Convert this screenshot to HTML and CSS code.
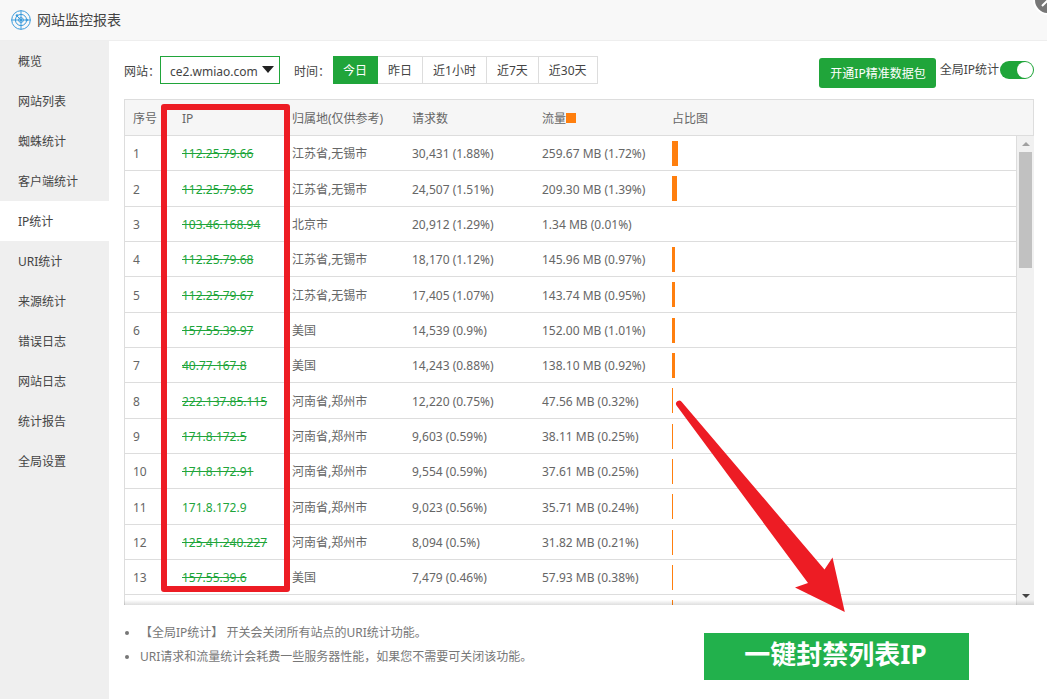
FILE: index.html
```html
<!DOCTYPE html>
<html lang="zh-CN">
<head>
<meta charset="utf-8">
<title>网站监控报表</title>
<link rel="stylesheet" href="styles.css">
</head>
<body>
<div class="window">
  <header class="titlebar">
    <svg class="logo" viewBox="0 0 20 20" aria-hidden="true">
      <circle cx="10" cy="10" r="9.3"/>
      <circle cx="10" cy="10" r="5.6"/>
      <circle cx="10" cy="10" r="2.4"/>
      <path d="M10 0.5V19.5M0.5 10H19.5M5.5 5.5L10 10"/>
      <circle class="dot" cx="10" cy="10" r="1.2"/>
      <circle class="dot" cx="6" cy="5.6" r="1.3"/>
      <circle class="dot" cx="15.8" cy="10" r="1.2"/>
    </svg>
    <h1 class="title">网站监控报表</h1>
  </header>
  <button class="close" type="button" aria-label="关闭">
    <svg viewBox="0 0 26 26" aria-hidden="true"><path d="M7 19L19 7M7 7L19 19"/></svg>
  </button>
  <div class="layout">
    <nav class="sidebar">
      <a class="nav-item" href="#">概览</a>
      <a class="nav-item" href="#">网站列表</a>
      <a class="nav-item" href="#">蜘蛛统计</a>
      <a class="nav-item" href="#">客户端统计</a>
      <a class="nav-item active" href="#">IP统计</a>
      <a class="nav-item" href="#">URI统计</a>
      <a class="nav-item" href="#">来源统计</a>
      <a class="nav-item" href="#">错误日志</a>
      <a class="nav-item" href="#">网站日志</a>
      <a class="nav-item" href="#">统计报告</a>
      <a class="nav-item" href="#">全局设置</a>
    </nav>
    <main class="content">
      <div class="toolbar">
        <label class="label" for="site">网站：</label>
        <div class="select-box">
          <select id="site" class="site-select"><option>ce2.wmiao.com</option></select>
          <svg class="caret" viewBox="0 0 12 7" aria-hidden="true"><path d="M0 0H12L6 7Z"/></svg>
        </div>
        <span class="label time-label">时间：</span>
        <div class="tabs">
          <button class="tab on" type="button">今日</button>
          <button class="tab" type="button">昨日</button>
          <button class="tab" type="button">近1小时</button>
          <button class="tab" type="button">近7天</button>
          <button class="tab" type="button">近30天</button>
        </div>
        <div class="actions">
          <button class="primary" type="button">开通IP精准数据包</button>
          <label class="switch-label" for="global">全局IP统计</label>
          <input id="global" class="switch" type="checkbox" checked>
        </div>
      </div>

      <section class="report">
        <table class="grid head">
          <colgroup><col class="c-no"><col class="c-ip"><col class="c-loc"><col class="c-num"><col class="c-num"><col></colgroup>
          <thead><tr><th>序号</th><th>IP</th><th>归属地(仅供参考)</th><th>请求数</th><th>流量<i class="legend"></i></th><th>占比图</th></tr></thead>
        </table>
        <div class="viewport">
          <div class="rows">
            <table class="grid body">
              <colgroup><col class="c-no"><col class="c-ip"><col class="c-loc"><col class="c-num"><col class="c-num"><col></colgroup>
              <tbody>
                <tr><td>1</td><td><a class="ip banned" href="#">112.25.79.66</a></td><td>江苏省,无锡市</td><td>30,431 (1.88%)</td><td>259.67 MB (1.72%)</td><td><div class="bar" style="width:1.72%"></div></td></tr>
                <tr><td>2</td><td><a class="ip banned" href="#">112.25.79.65</a></td><td>江苏省,无锡市</td><td>24,507 (1.51%)</td><td>209.30 MB (1.39%)</td><td><div class="bar" style="width:1.39%"></div></td></tr>
                <tr><td>3</td><td><a class="ip banned" href="#">103.46.168.94</a></td><td>北京市</td><td>20,912 (1.29%)</td><td>1.34 MB (0.01%)</td><td><div class="bar" style="width:0.01%"></div></td></tr>
                <tr><td>4</td><td><a class="ip banned" href="#">112.25.79.68</a></td><td>江苏省,无锡市</td><td>18,170 (1.12%)</td><td>145.96 MB (0.97%)</td><td><div class="bar" style="width:0.97%"></div></td></tr>
                <tr><td>5</td><td><a class="ip banned" href="#">112.25.79.67</a></td><td>江苏省,无锡市</td><td>17,405 (1.07%)</td><td>143.74 MB (0.95%)</td><td><div class="bar" style="width:0.95%"></div></td></tr>
                <tr><td>6</td><td><a class="ip banned" href="#">157.55.39.97</a></td><td>美国</td><td>14,539 (0.9%)</td><td>152.00 MB (1.01%)</td><td><div class="bar" style="width:1.01%"></div></td></tr>
                <tr><td>7</td><td><a class="ip banned" href="#">40.77.167.8</a></td><td>美国</td><td>14,243 (0.88%)</td><td>138.10 MB (0.92%)</td><td><div class="bar" style="width:0.92%"></div></td></tr>
                <tr><td>8</td><td><a class="ip banned" href="#">222.137.85.115</a></td><td>河南省,郑州市</td><td>12,220 (0.75%)</td><td>47.56 MB (0.32%)</td><td><div class="bar" style="width:0.32%"></div></td></tr>
                <tr><td>9</td><td><a class="ip banned" href="#">171.8.172.5</a></td><td>河南省,郑州市</td><td>9,603 (0.59%)</td><td>38.11 MB (0.25%)</td><td><div class="bar" style="width:0.25%"></div></td></tr>
                <tr><td>10</td><td><a class="ip banned" href="#">171.8.172.91</a></td><td>河南省,郑州市</td><td>9,554 (0.59%)</td><td>37.61 MB (0.25%)</td><td><div class="bar" style="width:0.25%"></div></td></tr>
                <tr><td>11</td><td><a class="ip" href="#">171.8.172.9</a></td><td>河南省,郑州市</td><td>9,023 (0.56%)</td><td>35.71 MB (0.24%)</td><td><div class="bar" style="width:0.24%"></div></td></tr>
                <tr><td>12</td><td><a class="ip banned" href="#">125.41.240.227</a></td><td>河南省,郑州市</td><td>8,094 (0.5%)</td><td>31.82 MB (0.21%)</td><td><div class="bar" style="width:0.21%"></div></td></tr>
                <tr><td>13</td><td><a class="ip banned" href="#">157.55.39.6</a></td><td>美国</td><td>7,479 (0.46%)</td><td>57.93 MB (0.38%)</td><td><div class="bar" style="width:0.38%"></div></td></tr>
                <tr><td></td><td></td><td></td><td></td><td></td><td><div class="bar" style="width:0.3%"></div></td></tr>
              </tbody>
            </table>
          </div>
          <div class="scrollbar" aria-hidden="true">
            <svg class="arrow up" viewBox="0 0 8 4"><path d="M0 4L4 0L8 4Z"/></svg>
            <div class="thumb"></div>
            <svg class="arrow down" viewBox="0 0 8 4"><path d="M0 0H8L4 4Z"/></svg>
          </div>
          <div class="fade"></div>
        </div>
        <div class="mark-box"></div>
        <svg class="mark-arrow" viewBox="0 0 170 212" aria-hidden="true">
          <path d="M1.500 5.500A3.200 3.200 0 0 1 7 2.200L149.500 169.500L157.500 157.500L169.800 212L120 187.500L133 183Z"/>
        </svg>
      </section>

      <ul class="notes">
        <li>【全局IP统计】 开关会关闭所有站点的URI统计功能。</li>
        <li>URI请求和流量统计会耗费一些服务器性能，如果您不需要可关闭该功能。</li>
      </ul>
      <button class="ban-all" type="button">一键封禁列表IP</button>
    </main>
  </div>
</div>
</body>
</html>
```
FILE: styles.css
```css
* { box-sizing: border-box; }

body {
  margin: 0;
  font: 12px/20px "Noto Sans", "Noto Sans CJK SC", sans-serif;
  color: #444;
  background: #fff;
}

button, select { font: inherit; color: inherit; margin: 0; }
a { color: inherit; text-decoration: none; }

.window {
  position: relative;
  display: flex;
  flex-direction: column;
  min-height: 100vh;
  overflow: hidden;
}

.titlebar {
  display: flex;
  align-items: center;
  gap: 6px;
  height: 41px;
  padding-left: 11px;
  background: #f8f8f8;
  border-bottom: 1px solid #eee;
}
.logo { width: 20px; height: 20px; fill: none; stroke: #3a9bdc; stroke-width: 1; }
.logo .dot { fill: #3a9bdc; stroke: none; }
.title { margin: 0; font-size: 14px; font-weight: 400; }

.close {
  position: absolute;
  top: -15px;
  right: -16px;
  width: 30px;
  height: 30px;
  padding: 0;
  border: 2px solid #fff;
  border-radius: 50%;
  background: #777;
}
.close svg { display: block; width: 26px; height: 26px; stroke: #fff; stroke-width: 2; }

.layout { display: flex; flex: 1; }
.sidebar { flex: 0 0 109px; background: #efefef; }
.nav-item { display: block; height: 40px; padding-left: 18px; line-height: 42px; }
.nav-item.active { background: #fff; }

.content { position: relative; flex: 1; min-width: 0; padding: 15px 13px 0 15px; }

.toolbar { display: flex; align-items: center; height: 28px; white-space: nowrap; }
.label { width: 36px; padding-top: 3px; }
.time-label { margin-left: 14px; width: 39px; }
.select-box { position: relative; width: 120px; }
.site-select {
  display: block;
  width: 100%;
  height: 28px;
  padding: 3px 20px 0 9px;
  border: 1px solid #20a53a;
  border-radius: 0;
  background: #fff;
  font-size: 12px;
  appearance: none;
}
.caret { position: absolute; right: 6px; top: 10px; width: 12px; height: 7px; fill: #222; pointer-events: none; }

.tabs { display: flex; }
.tab {
  height: 28px;
  padding: 2px 10px 0;
  border: 1px solid #ddd;
  border-left: 0;
  background: #fff;
}
.tab.on { border-color: #20a53a; background: #20a53a; color: #fff; }

.actions { display: flex; align-items: center; margin-left: auto; }
.primary {
  height: 30px;
  margin-top: 5px;
  padding: 2px 10px 0 11px;
  border: 0;
  border-radius: 3px;
  background: #20a53a;
  color: #fff;
}
.switch-label { margin: 0 1px 0 4px; }
.switch {
  appearance: none;
  display: flex;
  justify-content: flex-end;
  width: 34px;
  height: 18px;
  margin: 0;
  padding: 1px;
  border-radius: 9px;
  background: #20a53a;
}
.switch::before { content: ""; width: 16px; height: 16px; border-radius: 50%; background: #fff; }

.report { position: relative; margin-top: 15px; color: #666; }
.grid { width: 100%; table-layout: fixed; border-collapse: separate; border-spacing: 0; }
.grid th, .grid td { padding: 2px 8px 0; text-align: left; font-weight: 400; white-space: nowrap; border-bottom: 1px solid #ddd; }
.head { border: 1px solid #ddd; border-bottom: 0; background: #f6f6f6; }
.head th { height: 36px; }
.body td:last-child { padding-top: 0; }
.c-no { width: 49px; }
.c-ip { width: 110px; }
.c-loc { width: 120px; }
.c-num { width: 130px; }
.legend { display: inline-block; width: 10px; height: 10px; background: #ff7f0e; }

.viewport { position: relative; display: flex; height: 469px; overflow: hidden; }
.rows { flex: 1; min-width: 0; overflow: hidden; border: solid #ddd; border-width: 0 1px; }
.body td { height: 35px; }
.body tr:nth-child(3n+2) td { height: 36px; }
.ip { color: #20a53a; }
.banned { text-decoration: line-through; }
.bar { height: 25px; background: #ff7f0e; }

.scrollbar {
  display: flex;
  flex-direction: column;
  align-items: center;
  width: 17px;
  padding: 6px 0 7px;
  background: #f1f1f1;
}
.arrow { width: 8px; height: 4px; }
.up { fill: #a0a0a0; }
.down { margin-top: auto; fill: #444; }
.thumb { width: 13px; height: 116px; margin-top: 6px; background: #c1c1c1; }
.fade {
  position: absolute;
  inset: auto 0 0;
  height: 5px;
  background: linear-gradient(rgba(0, 0, 0, 0), rgba(0, 0, 0, .13));
}

.mark-box {
  position: absolute;
  left: 37px;
  top: 5px;
  width: 129px;
  height: 488px;
  border: 6px solid #ed1c24;
  border-radius: 3px;
}
.mark-arrow { position: absolute; left: 551px; top: 301px; width: 170px; height: 212px; fill: #ed1c24; }

.notes { margin: 16px 0 0; padding-left: 16px; line-height: 24px; color: #777; }

.ban-all {
  position: absolute;
  right: 78px;
  bottom: 19px;
  width: 265px;
  height: 47px;
  padding: 0 2px 4px 0;
  border: 0;
  background: #22b14c;
  color: #fff;
  font-size: 26px;
  font-weight: 700;
  line-height: 43px;
}
```
